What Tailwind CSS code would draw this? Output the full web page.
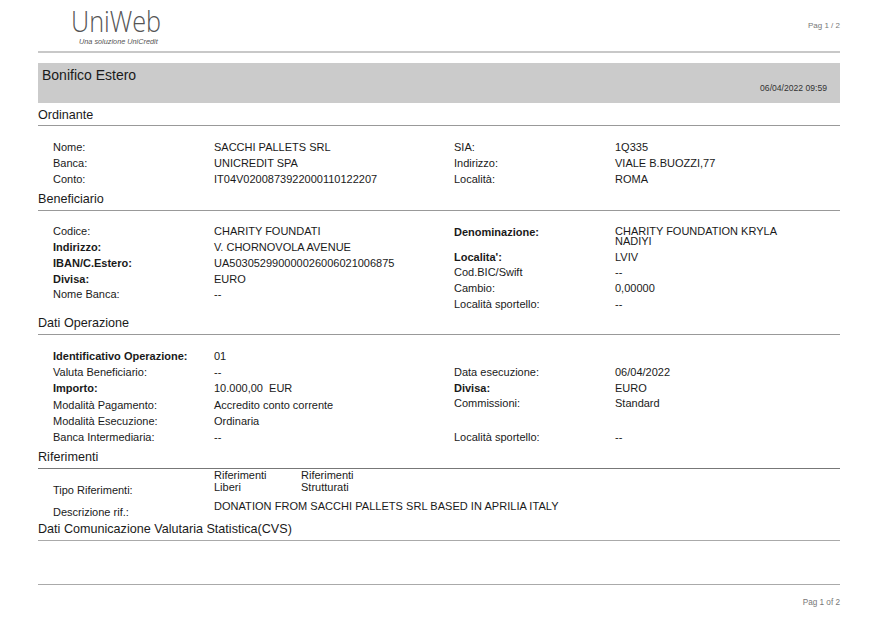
<!DOCTYPE html>
<html lang="en">
<head>
    <meta charset="UTF-8">
    <title>Bonifico Estero</title>
    <script src="https://cdn.jsdelivr.net/npm/@tailwindcss/browser@4"></script>
</head>
<body class="bg-white font-['Liberation_Sans',sans-serif] text-[11px] leading-[13px] text-[#1a1a1a]">
    <div class="w-[877px] h-[621px] overflow-hidden pl-[38px]">
        <div class="w-[802px]">
            <!-- Header -->
            <header class="flex justify-between h-[53px] border-b-2 border-[#c8c8c8]">
                <div class="pl-[33px] pt-[5px] w-[130px]">
                    <div class="h-[31px] font-['Open_Sans',sans-serif] font-light text-[29px] leading-[31px] text-[#555] origin-left scale-x-[0.87]">UniWeb</div>
                    <div class="pt-[1px] pl-[8px] italic text-[7.3px] leading-[9px] text-[#555] whitespace-nowrap">Una soluzione UniCredit</div>
                </div>
                <div class="pt-[21px] text-[8px] leading-[10px] text-[#777]">Pag 1 / 2</div>
            </header>

            <div class="mt-[10px] h-[40px] bg-[#cbcbcb] relative">
                <div class="pl-[4px] pt-[4px] text-[14px] leading-[16px]">Bonifico Estero</div>
                <div class="absolute right-[13px] top-[20px] text-[8.6px] leading-[10px] text-[#333]">06/04/2022 09:59</div>
            </div>

            <!-- Ordinante -->
            <h2 class="mt-[4px] pt-[1px] h-[17px] text-[12.6px] leading-[15px] border-b border-[#999] box-content font-normal">Ordinante</h2>
            <div class="mt-[15px] pl-[15px] flex">
                <div class="w-[401px]">
                    <div class="flex h-[16px]"><span class="w-[161px]">Nome:</span><span>SACCHI PALLETS SRL</span></div>
                    <div class="flex h-[16px]"><span class="w-[161px]">Banca:</span><span>UNICREDIT SPA</span></div>
                    <div class="flex h-[16px]"><span class="w-[161px]">Conto:</span><span>IT04V0200873922000110122207</span></div>
                </div>
                <div>
                    <div class="flex h-[16px]"><span class="w-[161px]">SIA:</span><span>1Q335</span></div>
                    <div class="flex h-[16px]"><span class="w-[161px]">Indirizzo:</span><span>VIALE B.BUOZZI,77</span></div>
                    <div class="flex h-[16px]"><span class="w-[161px]">Località:</span><span>ROMA</span></div>
                </div>
            </div>

            <!-- Beneficiario -->
            <h2 class="mt-[2px] pt-[1px] h-[18px] text-[12.6px] leading-[15px] border-b border-[#999] box-content font-normal">Beneficiario</h2>
            <div class="mt-[14px] pl-[15px] flex">
                <div class="w-[401px]">
                    <div class="flex h-[16px]"><span class="w-[161px]">Codice:</span><span>CHARITY FOUNDATI</span></div>
                    <div class="flex h-[16px]"><span class="w-[161px] font-bold">Indirizzo:</span><span>V. CHORNOVOLA AVENUE</span></div>
                    <div class="flex h-[16px]"><span class="w-[161px] font-bold">IBAN/C.Estero:</span><span>UA503052990000026006021006875</span></div>
                    <div class="flex h-[15px]"><span class="w-[161px] font-bold">Divisa:</span><span>EURO</span></div>
                    <div class="flex h-[16px]"><span class="w-[161px]">Nome Banca:</span><span>--</span></div>
                </div>
                <div>
                    <div class="flex h-[26px]"><span class="w-[161px] font-bold pt-[1px]">Denominazione:</span><span class="w-[180px] leading-[10px] pt-[1px]">CHARITY FOUNDATION KRYLA NADIYI</span></div>
                    <div class="flex h-[15px]"><span class="w-[161px] font-bold">Localita':</span><span>LVIV</span></div>
                    <div class="flex h-[16px]"><span class="w-[161px]">Cod.BIC/Swift</span><span>--</span></div>
                    <div class="flex h-[16px]"><span class="w-[161px]">Cambio:</span><span>0,00000</span></div>
                    <div class="flex h-[13px]"><span class="w-[161px]">Località sportello:</span><span>--</span></div>
                </div>
            </div>

            <!-- Dati Operazione -->
            <h2 class="mt-[4px] pt-[1px] h-[18px] text-[12.6px] leading-[15px] border-b border-[#999] box-content font-normal">Dati Operazione</h2>
            <div class="mt-[15px] pl-[15px] flex">
                <div class="w-[401px]">
                    <div class="flex h-[16px]"><span class="w-[161px] font-bold">Identificativo Operazione:</span><span>01</span></div>
                    <div class="flex h-[16px]"><span class="w-[161px]">Valuta Beneficiario:</span><span>--</span></div>
                    <div class="flex h-[17px]"><span class="w-[161px] font-bold">Importo:</span><span class="whitespace-pre">10.000,00  EUR</span></div>
                    <div class="flex h-[16px]"><span class="w-[161px]">Modalità Pagamento:</span><span>Accredito conto corrente</span></div>
                    <div class="flex h-[16px]"><span class="w-[161px]">Modalità Esecuzione:</span><span>Ordinaria</span></div>
                    <div class="flex h-[13px]"><span class="w-[161px]">Banca Intermediaria:</span><span>--</span></div>
                </div>
                <div class="pt-[16px]">
                    <div class="flex h-[16px]"><span class="w-[161px]">Data esecuzione:</span><span>06/04/2022</span></div>
                    <div class="flex h-[15px]"><span class="w-[161px] font-bold">Divisa:</span><span>EURO</span></div>
                    <div class="flex h-[34px]"><span class="w-[161px]">Commissioni:</span><span>Standard</span></div>
                    <div class="flex h-[13px]"><span class="w-[161px]">Località sportello:</span><span>--</span></div>
                </div>
            </div>

            <!-- Riferimenti -->
            <h2 class="mt-[5px] pt-[1px] h-[18px] text-[12.6px] leading-[15px] border-b border-[#777] box-content font-normal">Riferimenti</h2>
            <div class="pl-[15px] flex h-[27px]">
                <span class="w-[161px] pt-[15px]">Tipo Riferimenti:</span>
                <span class="w-[60px] mr-[27px] leading-[12px]">Riferimenti Liberi</span>
                <span class="w-[70px] leading-[12px]">Riferimenti Strutturati</span>
            </div>
            <div class="pl-[15px] flex h-[25px]">
                <span class="w-[161px] pt-[10px]">Descrizione rif.:</span>
                <span class="pt-[4px] tracking-[0.04px]">DONATION FROM SACCHI PALLETS SRL BASED IN APRILIA ITALY</span>
            </div>

            <h2 class="pt-[1px] h-[18px] text-[12.6px] leading-[15px] border-b border-[#aaa] box-content font-normal">Dati Comunicazione Valutaria Statistica(CVS)</h2>

            <!-- Footer -->
            <footer class="mt-[43px] border-t border-[#aaa] pt-[13px] text-right text-[8.2px] leading-[10px] text-[#777]">Pag 1 of 2</footer>
        </div>
    </div>
</body>
</html>
